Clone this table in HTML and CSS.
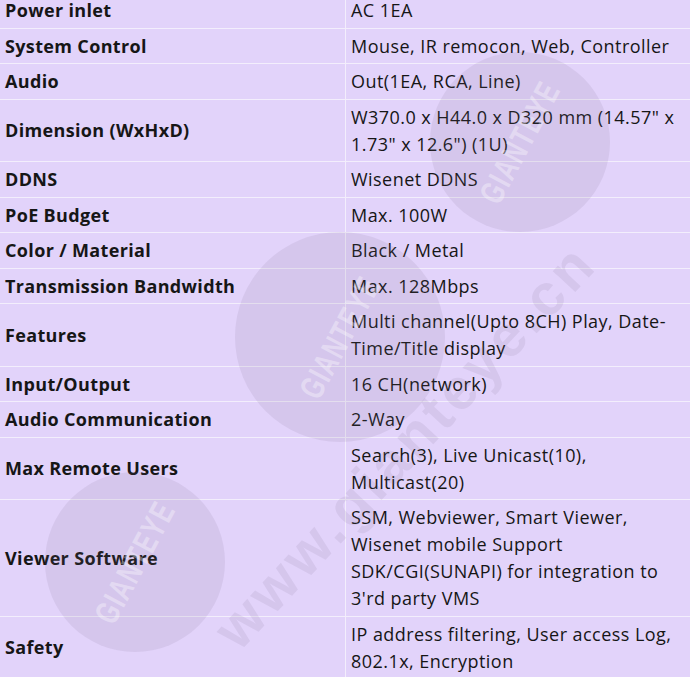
FILE: index.html
```html
<!DOCTYPE html>
<html>
<head>
    <title>Specification</title>
    <link rel="stylesheet" href="styles.css">
</head>
<body>
    <div class="sheet">
        <table class="spec">
            <tr><th>Power inlet</th><td>AC 1EA</td></tr>
            <tr><th>System Control</th><td>Mouse, IR remocon, Web, Controller</td></tr>
            <tr><th>Audio</th><td>Out(1EA, RCA, Line)</td></tr>
            <tr><th>Dimension (WxHxD)</th><td>W370.0 x H44.0 x D320 mm (14.57" x 1.73" x 12.6") (1U)</td></tr>
            <tr><th>DDNS</th><td>Wisenet DDNS</td></tr>
            <tr><th>PoE Budget</th><td>Max. 100W</td></tr>
            <tr><th>Color / Material</th><td>Black / Metal</td></tr>
            <tr><th>Transmission Bandwidth</th><td>Max. 128Mbps</td></tr>
            <tr><th>Features</th><td>Multi channel(Upto 8CH) Play, Date-Time/Title display</td></tr>
            <tr><th>Input/Output</th><td>16 CH(network)</td></tr>
            <tr><th>Audio Communication</th><td>2-Way</td></tr>
            <tr><th>Max Remote Users</th><td>Search(3), Live Unicast(10), Multicast(20)</td></tr>
            <tr><th>Viewer Software</th><td>SSM, Webviewer, Smart Viewer, Wisenet mobile Support SDK/CGI(SUNAPI) for integration to 3'rd party VMS</td></tr>
            <tr><th>Safety</th><td>IP address filtering, User access Log, 802.1x, Encryption</td></tr>
        </table>

        <!-- watermark -->
        <div class="mark">
            <div class="disc disc-a"><span>GIANTEYE</span></div>
            <div class="disc disc-b"><span>GIANTEYE</span></div>
            <div class="disc disc-c"><span>GIANTEYE</span></div>
            <div class="url">www.gianteye.cn</div>
        </div>
    </div>
</body>
</html>
```

FILE: styles.css
```css
body {
    margin: 0;
    background: #e2d3fa;
    overflow: hidden;
}
.sheet {
    position: relative;
    margin-top: -8px;
}
.spec {
    width: 690px;
    border-collapse: collapse;
    font-family: "Open Sans", "Noto Sans", sans-serif;
    font-size: 18px;
    letter-spacing: 0.45px;
    line-height: 27px;
    color: #161616;
    background: #e2d3fa;
}
.spec th, .spec td {
    border: 1px solid #f3eefc;
    padding: 4px 5px 3.5px 5px;
    text-align: left;
    vertical-align: middle;
}
.spec th {
    width: 335px;
    font-weight: 700;
    letter-spacing: 0.35px;
    border-left: none;
}
.spec td {
    border-right: none;
}
.mark {
    position: absolute;
    inset: 0;
    pointer-events: none;
    overflow: hidden;
}
.disc {
    position: absolute;
    border-radius: 50%;
    background: rgba(120, 105, 140, 0.12);
    display: flex;
    align-items: center;
    justify-content: center;
}
.disc span {
    font-family: "Liberation Sans", sans-serif;
    font-weight: 700;
    font-size: 34px;
    letter-spacing: 2px;
    color: rgba(255, 255, 255, 0.35);
    transform: rotate(-62deg) scaleX(0.7);
}
.disc-a { left: 235px; top: 240px; width: 210px; height: 210px; }
.disc-b { left: 45px; top: 480px; width: 180px; height: 180px; }
.disc-c { left: 430px; top: 60px; width: 180px; height: 180px; }
.url {
    position: absolute;
    left: 140px;
    top: 420px;
    font-family: "Liberation Sans", sans-serif;
    font-weight: 700;
    font-size: 58px;
    letter-spacing: 4px;
    color: rgba(120, 105, 140, 0.12);
    transform: rotate(-47deg);
    white-space: nowrap;
}
```
